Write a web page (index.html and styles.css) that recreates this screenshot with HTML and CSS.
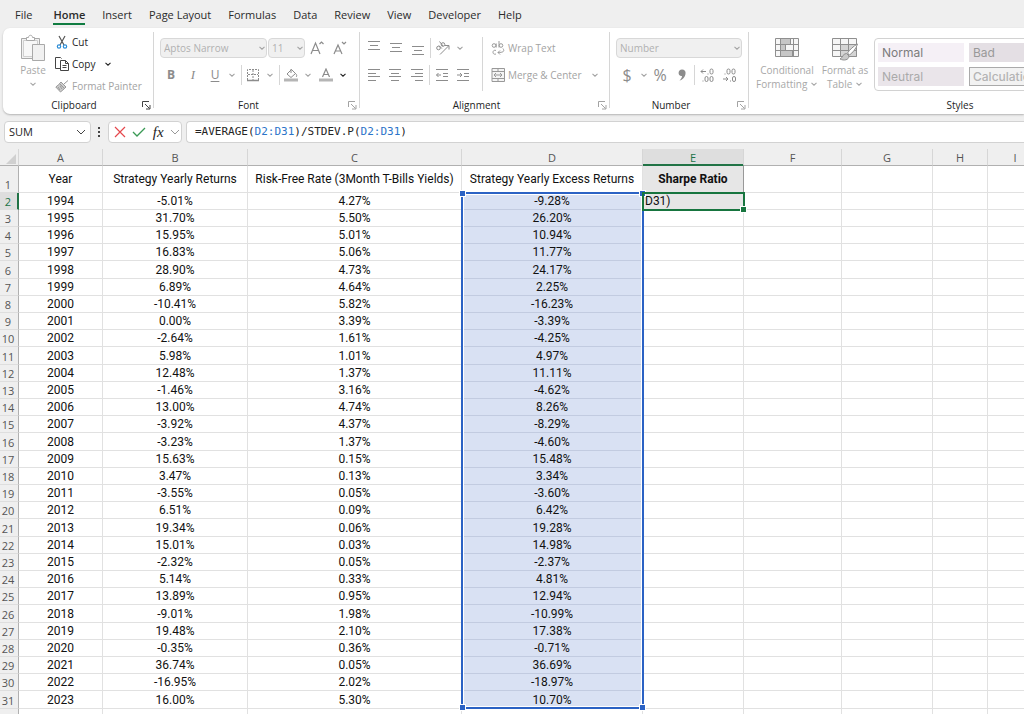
FILE: index.html
```html
<!DOCTYPE html>
<html lang="en">
<head>
<meta charset="utf-8">
<title>Sharpe Ratio workbook</title>
<link rel="stylesheet" href="styles.css">
</head>
<body>
<svg class="defs" aria-hidden="true">
  <symbol id="chev" viewBox="0 0 8 8"><path d="M1.5 2.8 4 5.2 6.5 2.8" fill="none" stroke="currentColor" stroke-width="1.1"/></symbol>
  <symbol id="launch" viewBox="0 0 9 9"><path d="M.5 6V.5H7M3 3l4.500 4.500M8 4v4H4" fill="none" stroke="currentColor"/></symbol>
</svg>
<nav class="tabs">
  <a class="tab tab-file" href="#file">File</a>
  <a class="tab active" href="#home">Home</a>
  <a class="tab" href="#insert">Insert</a>
  <a class="tab" href="#layout">Page Layout</a>
  <a class="tab" href="#formulas">Formulas</a>
  <a class="tab" href="#data">Data</a>
  <a class="tab" href="#review">Review</a>
  <a class="tab" href="#view">View</a>
  <a class="tab" href="#developer">Developer</a>
  <a class="tab" href="#help">Help</a>
</nav>

<div class="ribbon">
  <section class="group g-clipboard">
    <div class="clip-body">
      <button class="big paste">
        <svg width="26" height="28" viewBox="0 0 26 28" fill="#f1f1f1" stroke="#a9a9a9"><path d="M1.500 4.500h18v20h-18z"/><path d="M3.500 6.500h14v16h-14z" fill="#f7f7f7" stroke="#cfcfcf"/><path d="M6.500 6.500v-3h2c0-3 4-3 4 0h2v3z" fill="#fff"/><path d="M12.500 10.500h12v16h-12z"/></svg>
        <span>Paste</span>
        <svg class="chev"><use href="#chev"/></svg>
      </button>
      <div class="stack">
        <button class="cmd dark"><svg width="14" height="14" viewBox="0 0 14 14" fill="none"><path d="M4 1l5 9M10 1 5 10" stroke="#555" stroke-width="1.200"/><circle cx="4" cy="11.500" r="1.700" stroke="#2f8fd8" stroke-width="1.200"/><circle cx="10" cy="11.500" r="1.700" stroke="#2f8fd8" stroke-width="1.200"/></svg>Cut</button>
        <button class="cmd dark"><svg width="14" height="14" viewBox="0 0 14 14" fill="#fff" stroke="#444"><path d="M5 11.500H.5V.5h5l1 1"/><path d="M5.500 3.500h5l3 3v7h-8z"/><path d="M10.500 3.500v3h3M7.500 8.500h4M7.500 10.500h4" fill="none"/></svg>Copy <svg class="chev gap-left"><use href="#chev"/></svg></button>
        <button class="cmd"><svg width="14" height="14" viewBox="0 0 14 14" fill="#ccc" stroke="#999"><path d="M13 1.500 9 5M6 3l5 5-1.500 1.500L4.500 4.500z"/><path d="M4.500 5 .8 8l4.700 5 4-3.500zM3 8l2 3M5 7l2 3"/></svg>Format Painter</button>
      </div>
    </div>
    <footer class="foot dark">Clipboard<button class="launch" aria-label="Clipboard settings"><svg><use href="#launch"/></svg></button></footer>
  </section>

  <section class="group g-font">
    <div class="rows">
      <div class="row">
        <span class="pick pick-font"><select aria-label="Font"><option>Aptos Narrow</option></select><svg class="chev"><use href="#chev"/></svg></span>
        <span class="pick pick-size"><select aria-label="Font size"><option>11</option></select><svg class="chev"><use href="#chev"/></svg></span>
        <button class="ib" aria-label="Increase font size"><svg width="16" height="16" viewBox="0 0 16 16"><path d="M2 14 6.500 3 11 14M3.500 10.500h6M10.500 4l2-2 2 2" fill="none" stroke="currentColor" stroke-width="1.200"/></svg></button>
        <button class="ib" aria-label="Decrease font size"><svg width="16" height="16" viewBox="0 0 16 16"><path d="M3 14 7 5l4 9M4.500 11h5M11 2l2 2 2-2" fill="none" stroke="currentColor" stroke-width="1.200"/></svg></button>
      </div>
      <div class="row">
        <button class="ib bold">B</button><button class="ib ital">I</button>
        <span class="split"><button class="ib under">U</button><button class="cb" aria-label="Underline styles"><svg class="chev"><use href="#chev"/></svg></button></span>
        <i class="sep"></i>
        <span class="split"><button class="ib" aria-label="Borders"><svg width="14" height="14" viewBox="0 0 14 14" fill="none" stroke="currentColor"><path d="M1.500 12V1.500h11V12M7 2v10M2 6.500h10" stroke-dasharray="2 1"/><path d="M1 12.500h12" stroke-width="1.500"/></svg></button><button class="cb" aria-label="Border styles"><svg class="chev"><use href="#chev"/></svg></button></span>
        <i class="sep"></i>
        <span class="split"><button class="ib" aria-label="Fill color"><svg width="14" height="14" viewBox="0 0 14 14" fill="none" stroke="currentColor"><path d="M3 6 7.500 1.500l4 4L7 9.500zM7 1v4M11.500 5.500c1.500 1 1.500 3 .5 3.500"/><path d="M0 12h14" stroke="#b5b5b5" stroke-width="3"/></svg></button><button class="cb" aria-label="Fill colors"><svg class="chev"><use href="#chev"/></svg></button></span>
        <span class="split"><button class="ib" aria-label="Font color"><svg width="14" height="14" viewBox="0 0 14 14" fill="none" stroke="currentColor"><path d="M3.500 9 7 1l3.500 8M4.500 6.500h5" stroke-width="1.200"/><path d="M0 12h14" stroke="#b5b5b5" stroke-width="3"/></svg></button><button class="cb dark" aria-label="Font colors"><svg class="chev"><use href="#chev"/></svg></button></span>
      </div>
    </div>
    <footer class="foot">Font<button class="launch" aria-label="Font settings"><svg><use href="#launch"/></svg></button></footer>
  </section>

  <section class="group g-align">
    <div class="align-body">
      <div class="rows">
        <div class="row">
          <button class="ib" aria-label="Top align"><svg class="ln" viewBox="0 0 14 14"><path d="M1 .5h12M3 4.500h8M1 8.500h12"/></svg></button>
          <button class="ib" aria-label="Middle align"><svg class="ln" viewBox="0 0 14 14"><path d="M1 2.500h12M3 6.500h8M1 10.500h12"/></svg></button>
          <button class="ib" aria-label="Bottom align"><svg class="ln" viewBox="0 0 14 14"><path d="M1 5.500h12M3 9.500h8M1 13.500h12"/></svg></button>
          <i class="sep tight"></i>
          <span class="split"><button class="ib" aria-label="Orientation"><svg width="16" height="16" viewBox="0 0 16 16" fill="none" stroke="currentColor"><path d="M5 14.500 13.500 6M10 5.500h4v4"/><circle cx="3.500" cy="8" r="1.800"/><path d="m4 5.500 2.800 3"/><circle cx="8" cy="4.500" r="1.800"/><path d="M4.500 1.500 8 6"/></svg></button><button class="cb" aria-label="Orientation options"><svg class="chev"><use href="#chev"/></svg></button></span>
        </div>
        <div class="row">
          <button class="ib" aria-label="Align left"><svg class="ln" viewBox="0 0 14 14"><path d="M1 1.500h12M1 5.500h8M1 8.500h12M1 12.500h8"/></svg></button>
          <button class="ib" aria-label="Center"><svg class="ln" viewBox="0 0 14 14"><path d="M1 1.500h12M3 5.500h8M1 8.500h12M3 12.500h8"/></svg></button>
          <button class="ib" aria-label="Align right"><svg class="ln" viewBox="0 0 14 14"><path d="M1 1.500h12M5 5.500h8M1 8.500h12M5 12.500h8"/></svg></button>
          <i class="sep tight"></i>
          <button class="ib" aria-label="Decrease indent"><svg class="ln" viewBox="0 0 14 14"><path d="M1 1.500h12M8 5.500h5M8 8.500h5M1 12.500h12M6 7H1.500M3.500 5l-2 2 2 2"/></svg></button>
          <button class="ib" aria-label="Increase indent"><svg class="ln" viewBox="0 0 14 14"><path d="M1 1.500h12M8 5.500h5M8 8.500h5M1 12.500h12M1 7h5M4 5l2 2-2 2"/></svg></button>
        </div>
      </div>
      <i class="rule"></i>
      <div class="rows">
        <div class="row"><button class="cmd"><svg width="14" height="14" viewBox="0 0 14 14" fill="none" stroke="#999"><circle cx="3" cy="4.500" r="1.800"/><path d="M5.200 2.500v4M8 0v6.500"/><circle cx="10" cy="4.500" r="1.800"/><path d="M5 9.500c-4-1.500-4 5 0 3.500M12 7.500c2 3 0 4-5 4M9 9.500l-2 2 2 2"/></svg>Wrap Text</button></div>
        <div class="row"><button class="cmd"><svg width="14" height="14" viewBox="0 0 14 14" fill="#f4f4f4" stroke="#999"><path d="M1 .5h12.500v13H1zM1 3.500h12M1 10.500h12M7 .5v3M7 10.500v3M3 7h8M5 5 3 7l2 2M9 5l2 2-2 2"/></svg>Merge &amp; Center <svg class="chev gap-left"><use href="#chev"/></svg></button></div>
      </div>
    </div>
    <footer class="foot">Alignment<button class="launch" aria-label="Alignment settings"><svg><use href="#launch"/></svg></button></footer>
  </section>

  <section class="group g-number">
    <div class="rows">
      <div class="row"><span class="pick pick-number"><select aria-label="Number format"><option>Number</option></select><svg class="chev"><use href="#chev"/></svg></span></div>
      <div class="row">
        <span class="split"><button class="ib sym">$</button><button class="cb" aria-label="Currencies"><svg class="chev"><use href="#chev"/></svg></button></span>
        <button class="ib sym">%</button>
        <button class="ib" aria-label="Comma style"><svg width="10" height="14" viewBox="0 0 10 14"><path d="M5 1.500c2.500 0 4 1.500 3.500 4.500S5.500 12 2.500 12.500c1.500-1.500 2.500-3 2.500-4.500C.5 8.500.5 1.500 5 1.500z" fill="#8c8c8c"/></svg></button>
        <i class="sep tight"></i>
        <button class="ib" aria-label="Increase decimal"><svg width="16" height="16" viewBox="0 0 16 16" fill="none" stroke="currentColor"><path d="M7 4.500H2M4 2.500l-2 2 2 2M8.500 7h1M3.500 14h1"/><rect x="11" y="2" width="3" height="5" rx="1.500"/><rect x="6" y="9.500" width="3" height="5" rx="1.500"/><rect x="11" y="9.500" width="3" height="5" rx="1.500"/></svg></button>
        <button class="ib" aria-label="Decrease decimal"><svg width="16" height="16" viewBox="0 0 16 16" fill="none" stroke="currentColor"><path d="M2 12h5M5 10l2 2-2 2M3.500 7h1M9 14h1"/><rect x="6" y="2" width="3" height="5" rx="1.500"/><rect x="11" y="2" width="3" height="5" rx="1.500"/><rect x="11.500" y="9.500" width="3" height="5" rx="1.500"/></svg></button>
      </div>
    </div>
    <footer class="foot">Number<button class="launch" aria-label="Number settings"><svg><use href="#launch"/></svg></button></footer>
  </section>

  <section class="group g-styles">
    <div class="styles-body">
      <button class="big wide">
        <svg width="26" height="26" viewBox="0 0 26 26" fill="#f6f6f6" stroke="#8f8f8f"><path d="M1.500 3.500h23v18h-23z"/><path d="M6.500 3.500h10v6h-10zM6.500 9.500h5v6h-5zM6.500 15.500h12v6h-12z" fill="#c6c6c6"/><path d="M1.500 9.500h23M1.500 15.500h23M6.500 3.500v18M19.500 3.500v18" fill="none"/></svg>
        <span>Conditional<br>Formatting <svg class="chev"><use href="#chev"/></svg></span>
      </button>
      <button class="big wide">
        <svg width="28" height="26" viewBox="0 0 28 26" fill="#f6f6f6" stroke="#8f8f8f"><path d="M1.500 3.500h24v18h-24z"/><path d="M9.500 9.500h16v12h-16z" fill="#d4d4d4"/><path d="M1.500 9.500h24M1.500 15.500h24M9.500 3.500v18M17.500 3.500v18" fill="none"/><path d="M26.500 9c-4 2-8 6-10 9l2 2c3-2 7-7 8-11z" fill="#fff"/><path d="M15.500 18.500c-4 0-3 4-6.500 5.500 4 2 9 1 9-3z" fill="#c9c9c9"/></svg>
        <span>Format as<br>Table <svg class="chev"><use href="#chev"/></svg></span>
      </button>
      <div class="gallery">
        <button class="st normal">Normal</button><button class="st bad">Bad</button>
        <button class="st neutral">Neutral</button><button class="st calc">Calculation</button>
      </div>
    </div>
    <footer class="foot">Styles</footer>
  </section>
</div>

<div class="fbar">
  <div class="box namebox"><input aria-label="Name box" value="SUM"><button class="drop" aria-label="Open name list"><svg class="chev-lg" viewBox="0 0 10 10"><path d="M1 3l4 4 4-4"/></svg></button></div>
  <i class="dots"></i>
  <div class="box actions">
    <button aria-label="Cancel"><svg width="12" height="12" viewBox="0 0 12 12"><path d="M1 1l10 10M11 1 1 11" fill="none" stroke="#e5484d" stroke-width="1.200"/></svg></button>
    <button aria-label="Enter"><svg width="14" height="12" viewBox="0 0 14 12"><path d="M1 6l4 4 8-8" fill="none" stroke="#3a9a55" stroke-width="1.300"/></svg></button>
    <button class="fx">fx</button>
    <svg class="chev-lg pale" viewBox="0 0 10 10"><path d="M1 3l4 4 4-4"/></svg>
  </div>
  <div class="box formula" role="textbox" aria-label="Formula bar" contenteditable="true" spellcheck="false">=AVERAGE(<span class="ref">D2:D31</span>)/STDEV.P(<span class="ref">D2:D31</span>)</div>
</div>

<main class="sheet">
<table>
<colgroup><col class="c-n"><col class="c-a"><col class="c-b"><col class="c-c"><col class="c-d"><col class="c-e"><col class="c-f"><col class="c-g"><col class="c-h"><col class="c-i"></colgroup>
<thead><tr><th class="corner"><svg width="10" height="10" viewBox="0 0 10 10"><path d="M10 0v10H0z" fill="#d0d0d0"/></svg></th><th>A</th><th>B</th><th>C</th><th>D</th><th class="on">E</th><th>F</th><th>G</th><th>H</th><th>I</th></tr>
<tr class="titles"><th>1</th><td>Year</td><td>Strategy Yearly Returns</td><td>Risk-Free Rate (3Month T-Bills Yields)</td><td>Strategy Yearly Excess Returns</td><td class="sharpe">Sharpe Ratio</td><td><td><td><td></tr></thead>
<tbody>
<tr><th class="on">2</th><td>1994<td>-5.01%<td>4.27%<td>-9.28%<td class="edit">D31)<td><td><td><td></tr>
<tr><th>3</th><td>1995<td>31.70%<td>5.50%<td>26.20%<td><td><td><td><td></tr>
<tr><th>4</th><td>1996<td>15.95%<td>5.01%<td>10.94%<td><td><td><td><td></tr>
<tr><th>5</th><td>1997<td>16.83%<td>5.06%<td>11.77%<td><td><td><td><td></tr>
<tr><th>6</th><td>1998<td>28.90%<td>4.73%<td>24.17%<td><td><td><td><td></tr>
<tr><th>7</th><td>1999<td>6.89%<td>4.64%<td>2.25%<td><td><td><td><td></tr>
<tr><th>8</th><td>2000<td>-10.41%<td>5.82%<td>-16.23%<td><td><td><td><td></tr>
<tr><th>9</th><td>2001<td>0.00%<td>3.39%<td>-3.39%<td><td><td><td><td></tr>
<tr><th>10</th><td>2002<td>-2.64%<td>1.61%<td>-4.25%<td><td><td><td><td></tr>
<tr><th>11</th><td>2003<td>5.98%<td>1.01%<td>4.97%<td><td><td><td><td></tr>
<tr><th>12</th><td>2004<td>12.48%<td>1.37%<td>11.11%<td><td><td><td><td></tr>
<tr><th>13</th><td>2005<td>-1.46%<td>3.16%<td>-4.62%<td><td><td><td><td></tr>
<tr><th>14</th><td>2006<td>13.00%<td>4.74%<td>8.26%<td><td><td><td><td></tr>
<tr><th>15</th><td>2007<td>-3.92%<td>4.37%<td>-8.29%<td><td><td><td><td></tr>
<tr><th>16</th><td>2008<td>-3.23%<td>1.37%<td>-4.60%<td><td><td><td><td></tr>
<tr><th>17</th><td>2009<td>15.63%<td>0.15%<td>15.48%<td><td><td><td><td></tr>
<tr><th>18</th><td>2010<td>3.47%<td>0.13%<td>3.34%<td><td><td><td><td></tr>
<tr><th>19</th><td>2011<td>-3.55%<td>0.05%<td>-3.60%<td><td><td><td><td></tr>
<tr><th>20</th><td>2012<td>6.51%<td>0.09%<td>6.42%<td><td><td><td><td></tr>
<tr><th>21</th><td>2013<td>19.34%<td>0.06%<td>19.28%<td><td><td><td><td></tr>
<tr><th>22</th><td>2014<td>15.01%<td>0.03%<td>14.98%<td><td><td><td><td></tr>
<tr><th>23</th><td>2015<td>-2.32%<td>0.05%<td>-2.37%<td><td><td><td><td></tr>
<tr><th>24</th><td>2016<td>5.14%<td>0.33%<td>4.81%<td><td><td><td><td></tr>
<tr><th>25</th><td>2017<td>13.89%<td>0.95%<td>12.94%<td><td><td><td><td></tr>
<tr><th>26</th><td>2018<td>-9.01%<td>1.98%<td>-10.99%<td><td><td><td><td></tr>
<tr><th>27</th><td>2019<td>19.48%<td>2.10%<td>17.38%<td><td><td><td><td></tr>
<tr><th>28</th><td>2020<td>-0.35%<td>0.36%<td>-0.71%<td><td><td><td><td></tr>
<tr><th>29</th><td>2021<td>36.74%<td>0.05%<td>36.69%<td><td><td><td><td></tr>
<tr><th>30</th><td>2022<td>-16.95%<td>2.02%<td>-18.97%<td><td><td><td><td></tr>
<tr><th>31</th><td>2023<td>16.00%<td>5.30%<td>10.70%<td><td><td><td><td></tr>
</tbody>
<tfoot><tr><th></th><td><td><td><td><td><td><td><td><td></tr></tfoot>
</table>
<div class="range"><i class="h tl"></i><i class="h tr"></i><i class="h bl"></i><i class="h br"></i></div>
<div class="cursor"><i></i></div>
</main>
</body>
</html>
```
FILE: styles.css
```css
* { box-sizing: border-box; }
body {
  margin: 0; height: 100vh; overflow: hidden;
  display: flex; flex-direction: column;
  background: #efefef; color: #242424;
  font: 11px/14px "Open Sans", "Noto Sans", sans-serif;
}
button, select, input { font: inherit; color: inherit; background: none; border: 0; padding: 0; margin: 0; }
svg { display: block; flex: none; }
.defs { position: absolute; width: 0; height: 0; }
.dark { color: #242424; }
.chev { width: 8px; height: 8px; }
.gap-left { margin-left: 6px; }

.tabs { display: flex; gap: 17px; height: 28px; flex: none; padding: 7px 15px 0; }
.tab { color: #2b2b2b; text-decoration: none; height: 17px; line-height: 16px; white-space: nowrap; }
.tab-file { margin-right: 4px; }
.tab.active { font-weight: 600; border-bottom: 2px solid #107c41; height: 18px; }

.ribbon {
  display: flex; flex: none; height: 86px; margin-left: 3px;
  background: #fff; border-radius: 7px 0 0 7px; overflow: hidden;
  box-shadow: 0 1px 2px #b4b4b4;
  color: #a3a3a3; font-size: 10px;
}
.group { flex: none; display: flex; flex-direction: column; justify-content: space-between; position: relative; }
.group::after { content: ""; position: absolute; right: 0; top: 4px; bottom: 6px; width: 1px; background: #d6d6d6; }
.g-clipboard { width: 151px; }
.g-font { width: 206px; }
.g-align { width: 250px; }
.g-number { width: 139px; }
.g-styles { width: 422px; }
.foot { position: relative; height: 17px; line-height: 16px; text-align: center; color: #242424; padding-right: 17px; font-weight: 500; }
.g-clipboard .foot { padding-right: 9px; }
.g-styles .foot { padding-right: 0; }
.launch { position: absolute; right: 3px; top: 4px; color: #a3a3a3; }
.dark .launch { color: #444; }
.launch svg { width: 9px; height: 9px; }

.clip-body { display: flex; padding: 4px 0 0 17px; }
.big { display: flex; flex-direction: column; align-items: center; color: #a8a8a8; line-height: 14px; }
.paste { width: 26px; margin-right: 9px; padding-top: 2px; }
.paste > span { padding-top: 1px; }
.paste .chev { margin-top: 3px; }
.stack { display: flex; flex-direction: column; align-items: flex-start; gap: 2px; }
.cmd { display: flex; align-items: center; gap: 3px; height: 20px; white-space: nowrap; color: #a3a3a3; }
.cmd.dark { color: #242424; }

.rows { display: flex; flex-direction: column; gap: 7px; padding-top: 10px; }
.row { display: flex; align-items: center; height: 20px; }
.g-font .rows, .g-number .rows { padding-left: 6px; }
.g-number .rows { padding-left: 6px; }
.ib { width: 22px; height: 20px; display: flex; align-items: center; justify-content: center; color: #8c8c8c; font-size: 12px; }
.cb { width: 11px; height: 20px; display: flex; align-items: center; justify-content: center; color: #a3a3a3; }
.cb.dark { color: #242424; }
.split { display: flex; }
.split + .split { margin-left: 2px; }
.bold { font-weight: 700; }
.ital { font: italic 13px "Liberation Serif", serif; }
.under { text-decoration: underline; text-underline-offset: 2px; }
.sym { font-size: 16px; }
.sep { width: 1px; height: 20px; margin-left: 4px; background: #d6d6d6; }
.sep.tight { margin: 0 1px; }
.ln { width: 14px; height: 14px; fill: none; stroke: #8c8c8c; }
.pick { position: relative; display: block; height: 20px; }
.pick select { appearance: none; width: 100%; height: 20px; padding-left: 3px; background: #f0f0f0; border: 1px solid #d8d8d8; border-radius: 4px; color: #b0b0b0; }
.pick .chev { position: absolute; right: 1px; top: 6px; }
.pick-font { width: 107px; }
.pick-size { width: 37px; margin: 0 1px; }
.pick-number { width: 126px; }
.align-body { display: flex; padding-left: 3px; }
.rule { width: 1px; height: 54px; margin: 9px 8px 0; background: #d6d6d6; }
.g-align .rows:first-child { width: 111px; }

.styles-body { display: flex; padding-left: 9px; }
.wide { width: 58px; padding-top: 7px; }
.wide .chev { display: inline-block; }
.wide > span { padding-top: 2px; white-space: nowrap; }
.gallery {
  display: grid; grid-template-columns: 86px 86px 86px; grid-auto-rows: 19px; gap: 5px;
  flex: 1; height: 53px; margin: 10px 0 0; padding: 4px 3px; border: 1px solid #d2d2d2; border-radius: 4px;
}
.st { text-align: left; padding-left: 4px; font: 12px/19px Inter, sans-serif; color: #7c7c7c; white-space: nowrap; }
.normal { background: #f5f0f6; }
.bad { background: #e4dfe4; color: #999; }
.neutral { grid-column: 1; background: #eae5ea; color: #aaa; }
.calc { background: #f2f2f2; border: 1px solid #aaa; color: #b4b4b4; line-height: 17px; padding-left: 3px; font-weight: 500; }

.fbar { display: flex; flex: none; align-items: center; height: 22px; margin: 7px 0 6px 4px; }
.box { display: flex; align-items: center; height: 22px; background: #fff; border: 1px solid #d2d2d2; border-radius: 4px; }
.namebox { width: 87px; padding: 0 4px; }
.namebox input { flex: 1; min-width: 0; outline: 0; }
.chev-lg { width: 10px; height: 10px; fill: none; stroke: #444; }
.pale { stroke: #999; }
.dots { width: 2px; height: 10px; margin: 0 8px 0 7px; background: repeating-linear-gradient(#444 0 2px, transparent 2px 4px); }
.actions { width: 74px; justify-content: space-between; padding: 0 1px 0 5px; margin-right: 4px; }
.fx { font: italic 15px "Liberation Serif", serif; }
.formula { flex: 1; padding-left: 8px; border-right: 0; border-radius: 4px 0 0 4px; font: 11px/20px "DejaVu Sans Mono", monospace; outline: 0; white-space: pre; }
.ref { color: #2b74c9; }

.sheet { position: relative; flex: 1; min-height: 0; overflow: hidden; background: #fff; }
table { table-layout: fixed; width: 1043px; border-collapse: separate; border-spacing: 0; font: 12px/15px Roboto, sans-serif; color: #111; }
.c-n { width: 19px; } .c-a { width: 84px; } .c-b { width: 145px; } .c-c { width: 214px; } .c-d { width: 181px; }
.c-e { width: 101px; } .c-f { width: 98px; } .c-g { width: 91px; } .c-h { width: 55px; } .c-i { width: 55px; }
td, th { padding: 1px 0 0; height: 17px; text-align: center; vertical-align: bottom; border-right: 1px solid #e1e1e1; border-bottom: 1px solid #e1e1e1; white-space: nowrap; }
th { background: #efefef; color: #555; font: 11px/14px "Open Sans", sans-serif; border-color: #dedede; }
tbody tr:nth-child(5n) > * { height: 18px; }
tr > th:first-child { border-right-color: #b0b0b0; text-align: center; padding-right: 2px; }
thead tr:first-child th { border-bottom-color: #b0b0b0; border-right-color: #d6d6d6; }
.corner svg { margin: 3px 0 1px 6px; }
thead tr:first-child th.on { background: #dedede; color: #217346; box-shadow: inset 0 -1px #217346; border-bottom-color: #217346; }
tbody th.on { background: #dedede; color: #217346; border-right: 2px solid #217346; padding-right: 1px; }
.titles > * { height: 27px; }
.titles td { vertical-align: middle; }
.sharpe { background: #e6e6e6; font-weight: 700; border-right-color: #999; }
.edit { background: #e6e6e6; text-align: left; padding-left: 2px; }
tbody td:nth-child(5) { background: #d9e1f3; border-bottom-color: #c2cbe0; }

.range { position: absolute; left: 461px; top: 43px; width: 183px; height: 517px; border: 2px solid #2b62c4; box-shadow: inset 0 0 0 1px #fff; }
.h { position: absolute; width: 5px; height: 5px; background: #2b62c4; outline: 1px solid #fff; }
.tl { left: -3px; top: -3px; } .tr { right: -3px; top: -3px; }
.bl { left: -3px; bottom: -3px; } .br { right: -3px; bottom: -3px; }
.cursor { position: absolute; left: 642px; top: 43px; width: 103px; height: 19px; border: 2px solid #17753f; }
.cursor i { position: absolute; right: -3px; bottom: -3px; width: 5px; height: 5px; background: #17753f; outline: 1px solid #fff; }
```
